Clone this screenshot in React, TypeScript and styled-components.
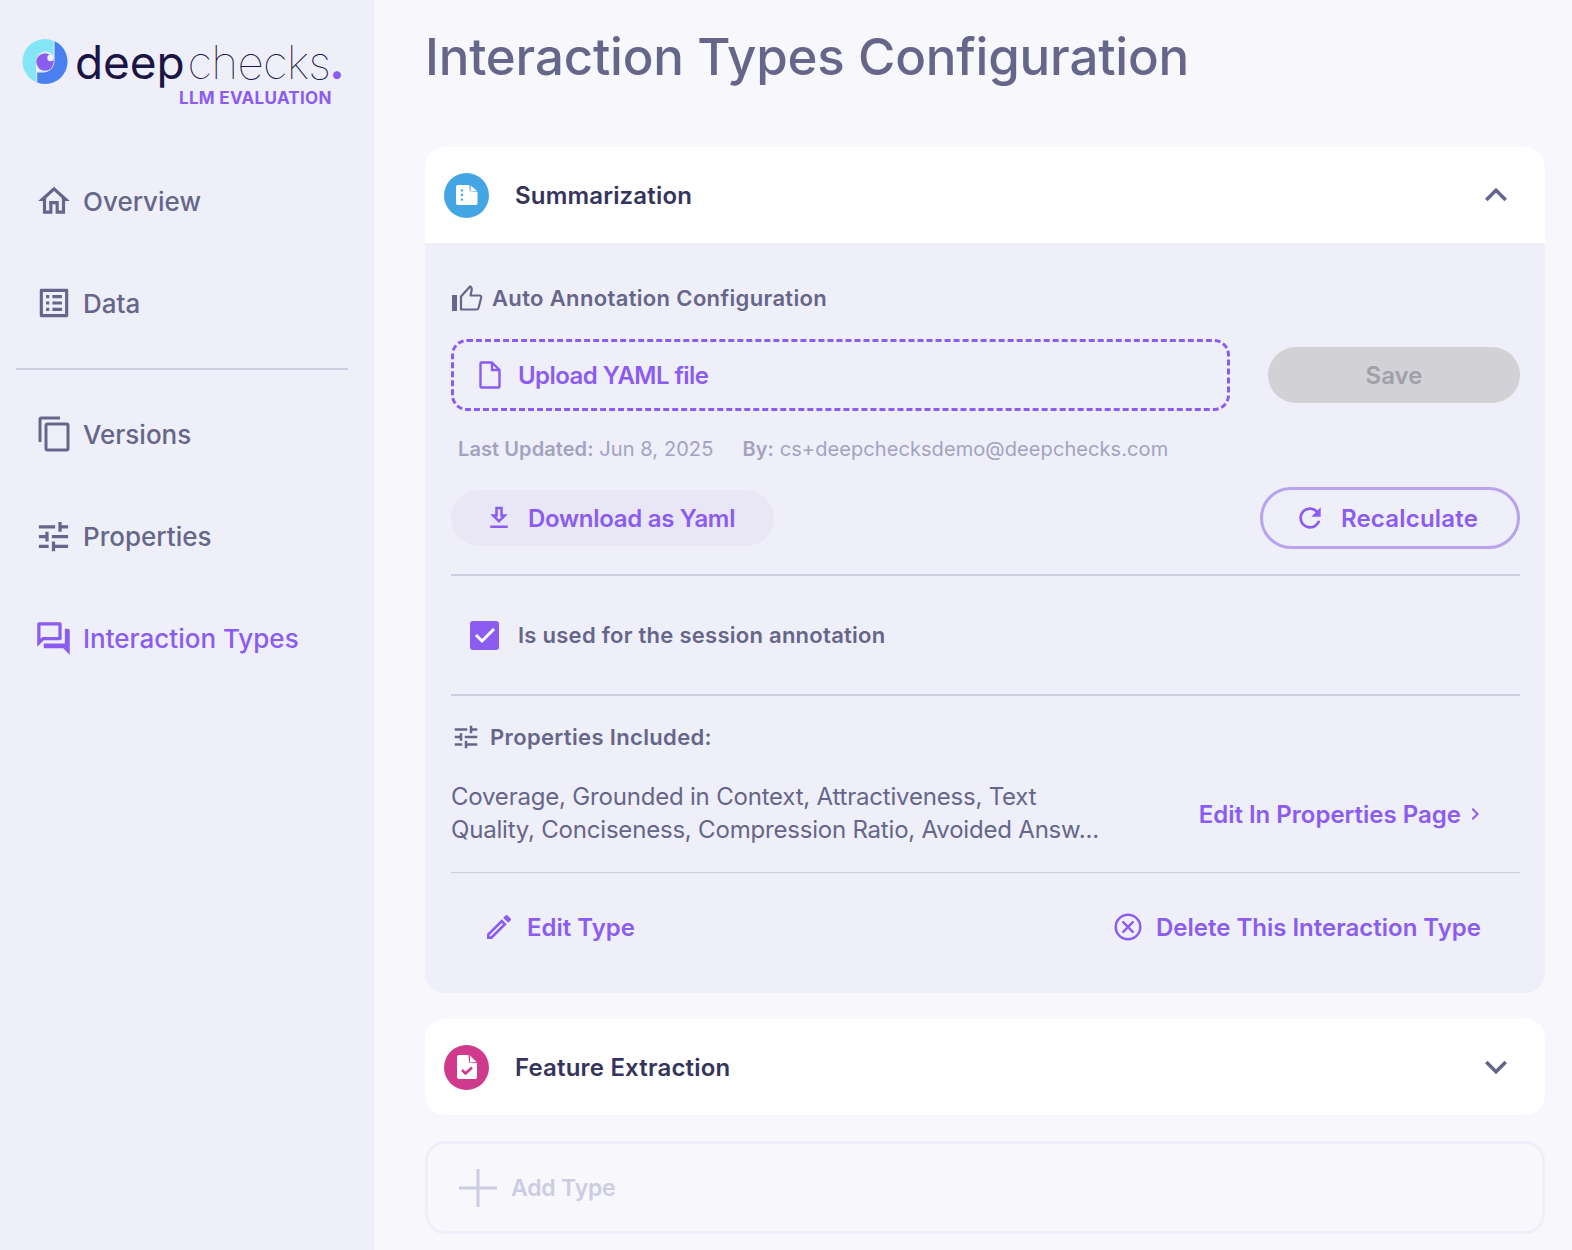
import React from "react";
import styled, { createGlobalStyle } from "styled-components";

const purple = "#8b5cf0";
const slate = "#66668a";
const ink = "#35345c";

const GlobalStyle = createGlobalStyle`
  html, body { margin: 0; padding: 0; background: #f7f7fc; }
  body { font-family: Inter, "Noto Sans", sans-serif; }
  * { box-sizing: border-box; }
`;

const Icon = ({ d, size = 24, color = "currentColor" }: { d: string; size?: number; color?: string }) => (
  <svg width={size} height={size} viewBox="0 0 24 24" fill={color} style={{ flex: "none" }}>
    <path d={d} />
  </svg>
);

const paths = {
  home: "M12 5.69l5 4.5V18h-2v-6H9v6H7v-7.81l5-4.5M12 3L2 12h3v8h6v-6h2v6h6v-8h3L12 3z",
  data: "M19 5v14H5V5h14m1.1-2H3.9c-.5 0-.9.4-.9.9v16.2c0 .4.4.9.9.9h16.2c.4 0 .9-.5.9-.9V3.9c0-.5-.5-.9-.9-.9zM11 7h6v2h-6V7zm0 4h6v2h-6v-2zm0 4h6v2h-6zM7 7h2v2H7zm0 4h2v2H7zm0 4h2v2H7z",
  tune: "M3 17v2h6v-2H3zM3 5v2h10V5H3zm10 16v-2h8v-2h-8v-2h-2v6h2zM7 9v2H3v2h4v2h2V9H7zm14 4v-2H11v2h10zm-6-4h2V7h4V5h-4V3h-2v6z",
  forum: "M15 4v7H5.17L4 12.17V4h11m1-2H3c-.55 0-1 .45-1 1v14l4-4h10c.55 0 1-.45 1-1V3c0-.55-.45-1-1-1zm5 4h-2v9H6v2c0 .55.45 1 1 1h11l4 4V7c0-.55-.45-1-1-1z",
  download: "M19 9h-4V3H9v6H5l7 7 7-7zm-8 2V5h2v6h1.17L12 13.17 9.83 11H11zm-6 7h14v2H5z",
  refresh: "M17.65 6.35C16.2 4.9 14.21 4 12 4c-4.42 0-7.99 3.58-7.99 8s3.57 8 7.99 8c3.73 0 6.84-2.55 7.73-6h-2.08c-.82 2.33-3.04 4-5.65 4-3.31 0-6-2.69-6-6s2.69-6 6-6c1.66 0 3.14.69 4.22 1.78L13 11h7V4l-2.35 2.35z",
  pencil: "M3 17.25V21h3.75L17.81 9.94l-3.75-3.75L3 17.25zM5.92 19H5v-.92l9.06-9.06.92.92L5.92 19zM20.71 7.04c.39-.39.39-1.02 0-1.41l-2.34-2.34c-.2-.2-.45-.29-.71-.29s-.51.1-.7.29l-1.83 1.83 3.75 3.75 1.83-1.83z",
  less: "M12 8l-6 6 1.41 1.41L12 10.83l4.59 4.58L18 14z",
  more: "M16.59 8.59L12 13.17 7.41 8.59 6 10l6 6 6-6z",
  next: "M10 6L8.59 7.41 13.17 12l-4.58 4.59L10 18l6-6z",
};

const CopyIcon = () => (
  <svg width="32" height="36" viewBox="0 0 32 36" fill="none" stroke="currentColor" strokeWidth="3" style={{ flex: "none" }}>
    <path d="M2 26V3.500C2 2.500 2.500 2 3.500 2H22" />
    <rect x="8" y="8" width="22" height="26" rx="1.500" />
  </svg>
);

const ThumbIcon = () => (
  <svg width="32" height="28" viewBox="0 0 32 28" fill="none" style={{ flex: "none" }}>
    <rect x="1" y="11" width="5" height="16" fill="currentColor" />
    <path
      d="M10 25.500V12.500L19 2.500c1.500 1 2 2.500 1.600 4L19.500 11.500H28.500c1.300 0 2 1 1.700 2.300L27.500 24c-.3 1-1 1.500-2 1.500z"
      stroke="currentColor"
      strokeWidth="2.200"
      strokeLinejoin="round"
    />
  </svg>
);

const FileIcon = () => (
  <svg width="24" height="28" viewBox="0 0 24 28" fill="none" stroke="currentColor" strokeWidth="2.400" strokeLinejoin="round" style={{ flex: "none" }}>
    <path d="M2.500 2.500a1 1 0 0 1 1-1H14l7.500 7.500v16.500a1 1 0 0 1-1 1h-17a1 1 0 0 1-1-1z" />
    <path d="M14 1.500V9h7.500" />
  </svg>
);

const CircleX = () => (
  <svg width="28" height="28" viewBox="0 0 28 28" fill="none" stroke="currentColor" strokeWidth="2.400" strokeLinecap="round" style={{ flex: "none" }}>
    <circle cx="14" cy="14" r="12.300" />
    <path d="M9.200 9.200l9.600 9.600M18.800 9.200l-9.600 9.600" />
  </svg>
);

const PlusIcon = () => (
  <svg width="40" height="40" viewBox="0 0 40 40" fill="none" stroke="#cdcde2" strokeWidth="3" style={{ flex: "none" }}>
    <path d="M20 1v38M1 20h38" />
  </svg>
);

const CheckBadgeDoc = () => (
  <svg width="20" height="24" viewBox="0 0 20 24" style={{ flex: "none" }}>
    <path d="M2 0h9.500L12 7.500 20 8v14a2 2 0 0 1-2 2H2a2 2 0 0 1-2-2V2a2 2 0 0 1 2-2z" fill="#fff" />
    <path d="M13 .5L19.500 7H13z" fill="#fff" />
    <path d="M5 15l3.500 3.500L15 12.500" fill="none" stroke="#cf3a8c" strokeWidth="2.600" />
  </svg>
);

const DotsBadgeDoc = () => (
  <svg width="22" height="22" viewBox="0 0 24 24" style={{ flex: "none" }}>
    <path d="M2 1h12.500L15 8l8.500.5V21a2 2 0 0 1-2 2H2a2 2 0 0 1-2-2V3a2 2 0 0 1 2-2z" fill="#fff" />
    <path d="M16 1.500l7 6h-7z" fill="#fff" />
    <circle cx="6.500" cy="7" r="1.300" fill="#44a5e4" />
    <circle cx="6.500" cy="12" r="1.300" fill="#44a5e4" />
    <circle cx="6.500" cy="17" r="1.300" fill="#44a5e4" />
  </svg>
);

const LogoMark = () => (
  <svg width="46" height="46" viewBox="0 0 46 46" style={{ flex: "none" }}>
    <defs>
      <clipPath id="logo-disc">
        <circle cx="23" cy="22.500" r="22.500" />
      </clipPath>
    </defs>
    <g clipPath="url(#logo-disc)">
      <rect width="46" height="46" fill="#84e6f4" />
      <path
        d="M32 -1H47V47H14.700V33H22A10.500 10.500 0 0 0 32 22.500z"
        fill="#4a7ff0"
        stroke="#eeeff8"
        strokeWidth="1"
      />
    </g>
    <path d="M14 22.500A9.500 9.500 0 0 1 31.500 17V22.500A9 9 0 0 1 22 32.500H14z" fill="#eeeff8" />
    <circle cx="23" cy="23" r="8.700" fill="#8b5cf0" />
    <circle cx="28.500" cy="19" r="3.200" fill="#eeeff8" />
  </svg>
);

const Page = styled.div`
  display: flex;
  width: 1572px;
  height: 1250px;
  overflow: hidden;
  background: #f7f7fc;
`;

const Sidebar = styled.aside`
  width: 374px;
  flex: none;
  background: #eeeff8;
  display: flex;
  flex-direction: column;
`;

const Logo = styled.div`
  height: 150px;
  padding: 39px 0 0 22px;
`;

const LogoRow = styled.div`
  display: flex;
  align-items: flex-start;
  gap: 7px;
`;

const Wordmark = styled.div`
  font-size: 46px;
  line-height: 46px;
  color: #1b1546;
  white-space: nowrap;
`;

const WordDeep = styled.span`
  font-weight: 400;
  letter-spacing: -0.1px;
  margin-right: 3px;
`;

const WordChecks = styled.span`
  font-weight: 100;
  letter-spacing: -0.8px;
`;

const WordDot = styled.span`
  color: ${purple};
  font-weight: 700;
  margin-left: -1px;
`;

const LogoTag = styled.div`
  margin: 3px 0 0 157px;
  font-size: 17px;
  line-height: 20px;
  font-weight: 700;
  color: ${purple};
  letter-spacing: 0.3px;
`;

const NavGroup = styled.nav`
  display: flex;
  flex-direction: column;
`;

const NavItem = styled.a<{ $active?: boolean }>`
  height: 102px;
  display: flex;
  align-items: center;
  padding-left: 37px;
  gap: 13px;
  font-size: 26px;
  font-weight: 540;
  color: ${(p) => (p.$active ? purple : slate)};
`;

const NavIconSlot = styled.span`
  width: 33px;
  display: flex;
  justify-content: center;
`;

const NavDivider = styled.hr`
  width: 332px;
  height: 2px;
  margin: 14px 0 13px 16px;
  border: 0;
  background: #cdcde2;
`;

const Main = styled.main`
  flex: 1;
  min-width: 0;
  padding: 0 27px 0 51px;
`;

const Title = styled.h1`
  margin: 0;
  height: 147px;
  padding-top: 24px;
  font-size: 51px;
  line-height: 66px;
  font-weight: 450;
  color: ${slate};
  letter-spacing: -0.2px;
`;

const Card = styled.section`
  border-radius: 20px;
  overflow: hidden;
  background: #eeeff8;
  margin-bottom: 26px;
`;

const CardHeader = styled.header`
  height: 96px;
  background: #fff;
  display: flex;
  align-items: center;
  padding: 0 27px 0 19px;
`;

const Badge = styled.div<{ $bg: string }>`
  width: 45px;
  height: 45px;
  border-radius: 50%;
  background: ${(p) => p.$bg};
  display: flex;
  align-items: center;
  justify-content: center;
  margin-right: 26px;
`;

const CardTitle = styled.div`
  flex: 1;
  font-size: 24px;
  font-weight: 600;
  letter-spacing: 0.18px;
  color: ${ink};
`;

const CardBody = styled.div`
  padding: 0 25px 0 26px;
  height: 750px;
  display: flex;
  flex-direction: column;
`;

const SectionLabel = styled.div<{ $h: number; $top?: number }>`
  height: ${(p) => p.$h}px;
  padding-top: ${(p) => p.$top ?? 0}px;
  display: flex;
  align-items: center;
  gap: 9px;
  font-size: 22px;
  font-weight: 600;
  letter-spacing: 0.35px;
  color: ${slate};
`;

const UploadRow = styled.div`
  display: flex;
  align-items: center;
  justify-content: space-between;
`;

const UploadBox = styled.div`
  width: 779px;
  height: 72px;
  border: 3px dashed ${purple};
  border-radius: 16px;
  display: flex;
  align-items: center;
  padding-left: 24px;
  gap: 16px;
  font-size: 24px;
  font-weight: 600;
  letter-spacing: -0.55px;
  color: ${purple};
`;

const SaveButton = styled.div`
  width: 252px;
  height: 56px;
  border-radius: 28px;
  background: #d1d1d6;
  color: #a0a0a8;
  font-size: 24px;
  font-weight: 600;
  display: flex;
  align-items: center;
  justify-content: center;
`;

const MetaRow = styled.div`
  height: 76px;
  padding-left: 7px;
  display: flex;
  align-items: center;
  gap: 29px;
  font-size: 20px;
  letter-spacing: 0.08px;
  color: #a3a3c0;
`;

const MetaKey = styled.b`
  font-weight: 600;
`;

const ActionRow = styled.div`
  display: flex;
  align-items: center;
  justify-content: space-between;
  height: 62px;
  margin-bottom: 25px;
`;

const DownloadButton = styled.div`
  width: 323px;
  height: 56px;
  border-radius: 28px;
  background: #e9e7f6;
  color: ${purple};
  display: flex;
  align-items: center;
  padding-left: 33px;
  gap: 14px;
  font-size: 24px;
  font-weight: 600;
  letter-spacing: -0.3px;
`;

const RecalcButton = styled.div`
  width: 260px;
  height: 62px;
  border-radius: 31px;
  border: 3px solid #b9a3ee;
  color: ${purple};
  display: flex;
  align-items: center;
  justify-content: center;
  gap: 15px;
  padding-right: 8px;
  font-size: 24px;
  font-weight: 600;
  letter-spacing: 0.2px;
`;

const Rule = styled.hr<{ $h: number }>`
  width: 100%;
  height: ${(p) => p.$h}px;
  margin: 0;
  border: 0;
  background: #cdcde2;
  flex: none;
`;

const CheckRow = styled.div`
  height: 118px;
  display: flex;
  align-items: center;
  padding-left: 19px;
  gap: 19px;
  font-size: 22px;
  font-weight: 600;
  letter-spacing: 0.27px;
  color: ${slate};
`;

const CheckBox = styled.div`
  width: 29px;
  height: 29px;
  border-radius: 3px;
  background: ${purple};
  display: flex;
  align-items: center;
  justify-content: center;
`;

const PropsRow = styled.div`
  display: flex;
  align-items: center;
  justify-content: space-between;
  height: 66px;
  margin: 2px 0 26px;
  padding-right: 33px;
`;

const PropsText = styled.div`
  width: 660px;
  font-size: 24px;
  line-height: 33px;
  font-weight: 400;
  letter-spacing: -0.2px;
  color: ${slate};
`;

const EditLink = styled.div`
  display: flex;
  align-items: center;
  gap: 2px;
  margin-top: 2px;
  font-size: 24px;
  font-weight: 600;
  color: ${purple};
`;

const FooterRow = styled.div`
  flex: 1;
  display: flex;
  justify-content: space-between;
  align-items: flex-start;
  padding: 37px 39px 0 32px;
`;

const FooterAction = styled.div<{ $gap: number }>`
  display: flex;
  align-items: center;
  gap: ${(p) => p.$gap}px;
  height: 34px;
  font-size: 24px;
  font-weight: 600;
  color: ${purple};
`;

const AddType = styled.div`
  height: 93px;
  border: 3px solid #eeeff8;
  border-radius: 20px;
  display: flex;
  align-items: center;
  padding-left: 30px;
  gap: 13px;
  font-size: 23px;
  font-weight: 600;
  letter-spacing: -0.2px;
  color: #cdcde2;
`;

const App = () => (
  <Page>
    <GlobalStyle />
    <Sidebar>
      <Logo>
        <LogoRow>
          <LogoMark />
          <Wordmark>
            <WordDeep>deep</WordDeep>
            <WordChecks>checks</WordChecks>
            <WordDot>.</WordDot>
          </Wordmark>
        </LogoRow>
        <LogoTag>LLM EVALUATION</LogoTag>
      </Logo>
      <NavGroup>
        <NavItem>
          <NavIconSlot><Icon d={paths.home} size={38} /></NavIconSlot>
          Overview
        </NavItem>
        <NavItem>
          <NavIconSlot><Icon d={paths.data} size={38} /></NavIconSlot>
          Data
        </NavItem>
      </NavGroup>
      <NavDivider />
      <NavGroup>
        <NavItem>
          <NavIconSlot><CopyIcon /></NavIconSlot>
          Versions
        </NavItem>
        <NavItem>
          <NavIconSlot><Icon d={paths.tune} size={39} /></NavIconSlot>
          Properties
        </NavItem>
        <NavItem $active>
          <NavIconSlot><Icon d={paths.forum} size={39} /></NavIconSlot>
          Interaction Types
        </NavItem>
      </NavGroup>
    </Sidebar>
    <Main>
      <Title>Interaction Types Configuration</Title>
      <Card>
        <CardHeader>
          <Badge $bg="#44a5e4"><DotsBadgeDoc /></Badge>
          <CardTitle>Summarization</CardTitle>
          <Icon d={paths.less} size={44} color={slate} />
        </CardHeader>
        <CardBody>
          <SectionLabel $h={96} $top={14}>
            <ThumbIcon />
            Auto Annotation Configuration
          </SectionLabel>
          <UploadRow>
            <UploadBox>
              <FileIcon />
              Upload YAML file
            </UploadBox>
            <SaveButton>Save</SaveButton>
          </UploadRow>
          <MetaRow>
            <span><MetaKey>Last Updated:</MetaKey> Jun 8, 2025</span>
            <span><MetaKey>By:</MetaKey> cs+deepchecksdemo@deepchecks.com</span>
          </MetaRow>
          <ActionRow>
            <DownloadButton>
              <Icon d={paths.download} size={30} />
              Download as Yaml
            </DownloadButton>
            <RecalcButton>
              <Icon d={paths.refresh} size={32} />
              Recalculate
            </RecalcButton>
          </ActionRow>
          <Rule $h={2} />
          <CheckRow>
            <CheckBox>
              <svg width="22" height="18" viewBox="0 0 22 18" fill="none" stroke="#fff" strokeWidth="3">
                <path d="M2 9l6 6L20 3" />
              </svg>
            </CheckBox>
            Is used for the session annotation
          </CheckRow>
          <Rule $h={2} />
          <SectionLabel $h={82}>
            <Icon d={paths.tune} size={30} />
            Properties Included:
          </SectionLabel>
          <PropsRow>
            <PropsText>
              Coverage, Grounded in Context, Attractiveness, Text Quality, Conciseness, Compression Ratio, Avoided Answ...
            </PropsText>
            <EditLink>
              Edit In Properties Page
              <Icon d={paths.next} size={24} />
            </EditLink>
          </PropsRow>
          <Rule $h={1} />
          <FooterRow>
            <FooterAction $gap={12}>
              <Icon d={paths.pencil} size={32} />
              Edit Type
            </FooterAction>
            <FooterAction $gap={14}>
              <CircleX />
              Delete This Interaction Type
            </FooterAction>
          </FooterRow>
        </CardBody>
      </Card>
      <Card>
        <CardHeader>
          <Badge $bg="#cf3a8c"><CheckBadgeDoc /></Badge>
          <CardTitle>Feature Extraction</CardTitle>
          <Icon d={paths.more} size={44} color={slate} />
        </CardHeader>
      </Card>
      <AddType>
        <PlusIcon />
        Add Type
      </AddType>
    </Main>
  </Page>
);

export default App;
